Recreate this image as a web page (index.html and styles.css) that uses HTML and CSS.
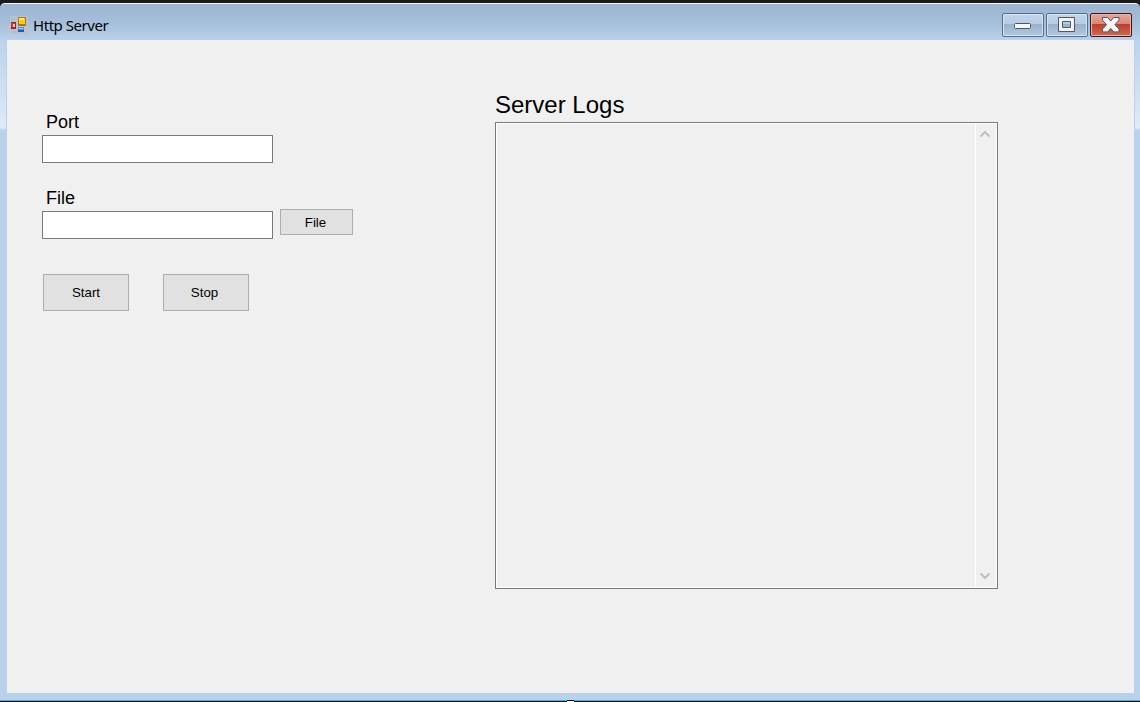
FILE: index.html
```html
<!DOCTYPE html>
<html lang="en">
<head>
<meta charset="utf-8">
<title>Http Server</title>
<link rel="stylesheet" href="styles.css">
</head>
<body>
<div class="window">
  <header class="titlebar">
    <svg class="app-icon" width="18" height="18" viewBox="0 0 18 18" shape-rendering="crispEdges">
      <path fill="#bdc1c6" d="M0 0h18v18H0z"/>
      <path fill="#a9c3dd" d="M1 1h5v4H1zM2 13h5v4H2z"/>
      <path fill="#a57c12" d="M8 1h8v9H8z"/>
      <path fill="#ffc52d" d="M9 2h6v6H9z"/>
      <path fill="#ffe682" d="M9 2h5v2H9z"/>
      <path fill="#a91e16" d="M1 6h5v7H1z"/>
      <path fill="#d2382c" d="M1 7h4v4H1z"/>
      <path fill="#ffd0c8" d="M3 8h2v3H3z"/>
      <path fill="#2459b8" d="M8 11h6v5H8z"/>
      <path fill="#5592ee" d="M8 11h6v3H8z"/>
      <path fill="#9cc4ff" d="M9 12h4v1H9z"/>
    </svg>
    <span class="title">Http Server</span>
    <div class="controls">
      <button class="control" aria-label="Minimize">
        <svg width="40" height="22" viewBox="0 0 40 22"><rect x="11.5" y="9.5" width="16" height="5" rx="1" fill="#f5f5f5" stroke="#535666"/></svg>
      </button>
      <button class="control" aria-label="Maximize">
        <svg width="40" height="22" viewBox="0 0 40 22"><path d="M11.5 3.5h16v14h-16zM15.5 7.5v6h8v-6z" fill="#f2f2f2" fill-rule="evenodd" stroke="#535666" stroke-linejoin="round"/></svg>
      </button>
      <button class="control close" aria-label="Close">
        <svg width="40" height="22" viewBox="0 0 40 22"><path d="M11.500 3.500h5.200l3 3.500 3-3.500h5.300v2.700L23.900 10.700l4.100 4.300v2.900h-5.300l-3-3.500-3 3.500h-5.200V15l4.100-4.300-4.100-4.500z" fill="#f4f4f4" stroke="#535666" stroke-linejoin="round"/></svg>
      </button>
    </div>
  </header>
  <main class="client">
    <form class="settings">
      <label class="label" for="port">Port</label>
      <input class="field" id="port" type="text">
      <label class="label file-label" for="file">File</label>
      <div class="file-row">
        <input class="field" id="file" type="text">
        <button class="button browse" type="button">File</button>
      </div>
      <div class="actions">
        <button class="button action start" type="button">Start</button>
        <button class="button action" type="button">Stop</button>
      </div>
    </form>
    <section class="logs">
      <h1 class="logs-title">Server Logs</h1>
      <div class="log-box">
        <div class="log-text"></div>
        <div class="scrollbar">
          <svg width="12" height="8" viewBox="0 0 12 8"><path d="M1.500 6.500 6 2l4.500 4.500" fill="none" stroke="#bfbfbf" stroke-width="2"/></svg>
          <svg width="12" height="8" viewBox="0 0 12 8"><path d="M1.500 1.500 6 6l4.500-4.500" fill="none" stroke="#bfbfbf" stroke-width="2"/></svg>
        </div>
      </div>
    </section>
  </main>
</div>
<footer class="edge"><span class="handle"></span></footer>
</body>
</html>
```
FILE: styles.css
```css
* {
  box-sizing: border-box;
}

body {
  margin: 0;
  width: 1140px;
  height: 702px;
  padding-top: 3px;
  overflow: hidden;
  background: #1b1b1d;
  color: #000;
  font-family: "Liberation Sans", Arial, sans-serif;
}

button {
  padding: 0;
  font-family: inherit;
  color: inherit;
}

.window {
  height: 697px;
  padding: 0 6px 7px 7px;
  border-top: 1px solid #f4f8fb;
  border-radius: 5px 5px 0 0;
  background:
    linear-gradient(#b9d1ea00 30px, #dfeaf6 124px, #c9dcf0 125px, #b9d1ea 127px) 0 0 / 6px 127px no-repeat,
    linear-gradient(#b9d1ea00 30px, #dfeaf6 124px, #c9dcf0 125px, #b9d1ea 127px) 100% 0 / 5px 127px no-repeat,
    linear-gradient(#9ab4d1, #a5bfdb 18px, #b9d1ea 37px);
}

.titlebar {
  display: flex;
  height: 36px;
  padding: 9px 2px 0 3px;
}

.app-icon {
  margin-top: 3px;
}

.title {
  margin: 2px 0 0 5px;
  font: 15px/20px "Noto Sans", sans-serif;
  letter-spacing: -0.45px;
}

.controls {
  display: flex;
  gap: 2px;
  margin-left: auto;
}

.control {
  width: 42px;
  height: 24px;
  border: 1px solid #576d8c;
  border-radius: 2px;
  background: linear-gradient(#c1d4e8, #b7cde4 10px, #98b1cc 10px, #b1c9e1);
  box-shadow: inset 0 0 0 1px #d5e4f1;
}

.control svg {
  display: block;
}

.close {
  border-color: #43121b;
  background: linear-gradient(#e6a69a, #d88878 10px, #b8402a 10px, #cf6a50);
  box-shadow: inset 0 0 0 1px #eab5a7;
}

.client {
  display: flex;
  height: 653px;
  padding: 51px 136px 0 35px;
  background: #f0f0f0;
}

.settings {
  width: 453px;
  padding-top: 20px;
}

.label {
  display: block;
  height: 24px;
  padding-left: 4px;
  font-size: 18px;
  line-height: 23px;
}

.file-label {
  margin-top: 24px;
}

.field {
  display: block;
  width: 231px;
  height: 28px;
  padding: 2px 4px;
  border: 1px solid #7a7a7a;
  border-radius: 0;
  background: #fff;
}

.file-row {
  display: flex;
  gap: 7px;
}

.button {
  border: 1px solid #adadad;
  background: #e1e1e1;
  font-size: 13.300px;
}

.browse {
  width: 73px;
  height: 26px;
  margin-top: -2px;
  padding-right: 2px;
}

.actions {
  display: flex;
  gap: 34px;
  margin: 35px 0 0 1px;
}

.action {
  width: 86px;
  height: 37px;
  padding-right: 3px;
}

.start {
  padding-right: 0;
}

.logs-title {
  height: 31px;
  margin: 0;
  font-size: 24px;
  font-weight: 400;
  line-height: 28px;
}

.log-box {
  display: flex;
  width: 503px;
  height: 467px;
  border: 1px solid #7a7a7a;
  box-shadow: inset 0 0 0 1px #fff;
}

.log-text {
  width: 479px;
}

.scrollbar {
  display: flex;
  flex: 1;
  flex-direction: column;
  align-items: center;
  justify-content: space-between;
  margin: 1px 1px 1px 0;
  padding: 6px 2px 7px 0;
  border-left: 1px solid #fff;
}

.edge {
  height: 2px;
  background: linear-gradient(#18c5e5 50%, #000 50%);
}

.handle {
  display: block;
  width: 7px;
  height: 2px;
  margin: 0 auto;
  background: linear-gradient(#000 50%, #fff 50%);
}
```
